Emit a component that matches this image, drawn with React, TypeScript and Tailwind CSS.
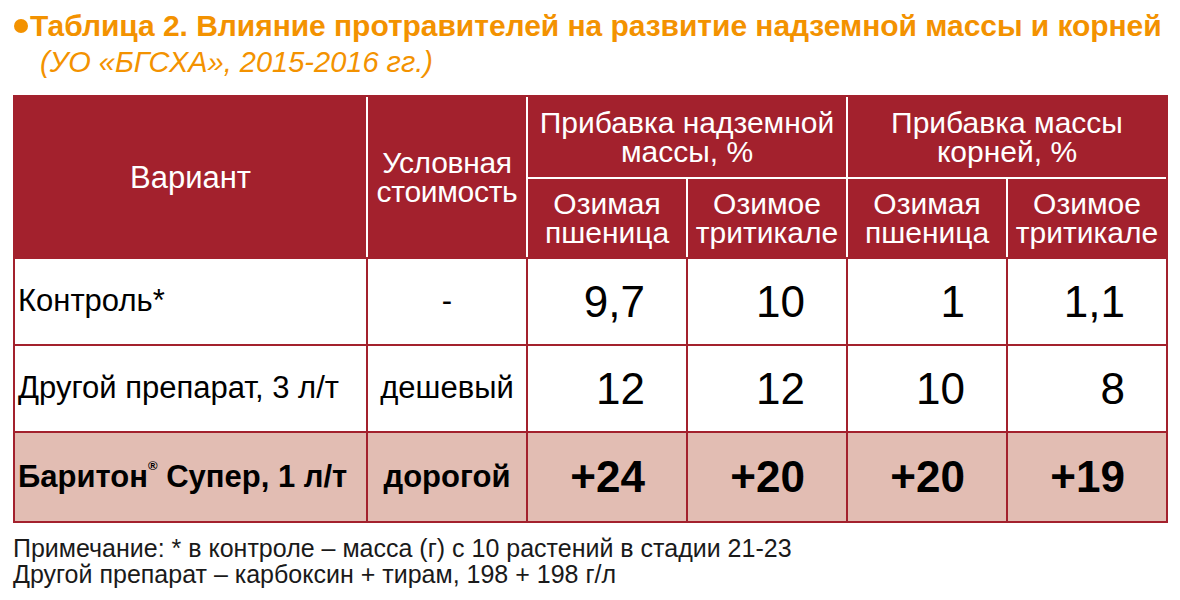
import React from 'react';

const RED = 'bg-[#a3212d]';

const rows = [
  { name: 'Контроль*', cost: '-', values: ['9,7', '10', '1', '1,1'], bold: false },
  { name: 'Другой препарат, 3 л/т', cost: 'дешевый', values: ['12', '12', '10', '8'], bold: false },
  { name: 'Баритон', cost: 'дорогой', values: ['+24', '+20', '+20', '+19'], bold: true },
];

const App: React.FC = () => {
  return (
    <div className="w-[1180px] h-[600px] bg-white font-['Liberation_Sans',Arial,sans-serif] text-black overflow-hidden">
      {/* title */}
      <div className="pt-[10px] pl-[14px] text-[#f39200]">
        <div className="flex items-center gap-[2px] h-[32px]">
          <span className="w-[14px] h-[14px] rounded-full bg-[#f39200]" />
          <span className="text-[30px] font-bold leading-none tracking-[-0.05px]">
            Таблица 2. Влияние протравителей на развитие надземной массы и корней
          </span>
        </div>
        <div className="pl-[26px] h-[40px] flex items-center text-[29px] italic leading-none">
          (УО «БГСХА», 2015-2016 гг.)
        </div>
      </div>

      {/* table */}
      <div className="ml-[13px] mt-[13px] w-[1155px] border-2 border-[#a3212d]">
        <div className="grid grid-cols-[351px_158px_158px_158px_158px_158px] grid-rows-[80px_78px] gap-[2px] bg-white text-white text-[30px] leading-[29px]">
          <div className={`${RED} row-span-2 flex items-center justify-center text-[31px]`}>Вариант</div>
          <div className={`${RED} row-span-2 flex items-center justify-center text-center tracking-[-0.3px]`}>
            Условная
            <br />
            стоимость
          </div>
          <div className={`${RED} col-span-2 flex items-center justify-center text-center`}>
            Прибавка надземной
            <br />
            массы, %
          </div>
          <div className={`${RED} col-span-2 flex items-center justify-center text-center`}>
            Прибавка массы
            <br />
            корней, %
          </div>
          {['Озимая|пшеница', 'Озимое|тритикале', 'Озимая|пшеница', 'Озимое|тритикале'].map((t, i) => (
            <div key={i} className={`${RED} flex flex-col items-center justify-center text-center`}>
              <span>{t.split('|')[0]}</span>
              <span>{t.split('|')[1]}</span>
            </div>
          ))}
        </div>
        <div className="grid grid-cols-[351px_158px_158px_158px_158px_158px] grid-rows-[85px_85px_88px] gap-[2px] bg-[#a3212d] border-t-2 border-[#a3212d]">
          {rows.map((r, ri) => {
            const cellBg = r.bold ? 'bg-[#e2bdb3]' : 'bg-white';
            return (
              <React.Fragment key={ri}>
                <div className={`${cellBg} flex items-center pl-[3px] text-[31px] ${r.bold ? 'font-bold' : ''}`}>
                  {r.bold ? (
                    <span>
                      Баритон<sup className="text-[13px] align-[10px]">®</sup> Супер, 1 л/т
                    </span>
                  ) : (
                    r.name
                  )}
                </div>
                <div className={`${cellBg} flex items-center justify-center text-[31px] ${r.bold ? 'font-bold' : ''}`}>
                  {r.cost}
                </div>
                {r.values.map((v, vi) => (
                  <div
                    key={vi}
                    className={`${cellBg} flex items-center justify-end pr-[41px] text-[44px] ${r.bold ? 'font-bold' : ''}`}
                  >
                    {v}
                  </div>
                ))}
              </React.Fragment>
            );
          })}
        </div>
      </div>

      {/* notes */}
      <div className="ml-[13px] mt-[12px] text-[25px] leading-[26px] text-[#1a1a1a]">
        <div>Примечание: * в контроле – масса (г) с 10 растений в стадии 21-23</div>
        <div>Другой препарат – карбоксин + тирам, 198 + 198 г/л</div>
      </div>
    </div>
  );
};

export default App;
